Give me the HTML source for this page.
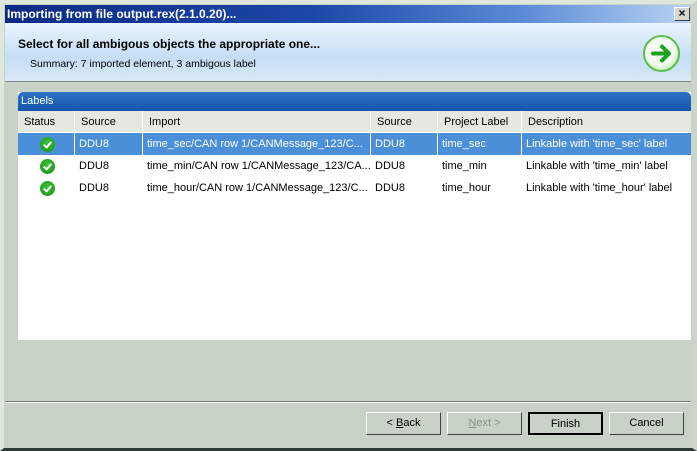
<!DOCTYPE html>
<html><head><style>
*{margin:0;padding:0;box-sizing:border-box}
body{width:697px;height:451px;background:#c9d2c6;position:relative;overflow:hidden;font-family:"Liberation Sans",sans-serif;font-size:11px;color:#000}
.outer{position:absolute;left:0;top:0;width:697px;height:451px;border-top:4px solid #dfe6dc;border-left:4px solid #dfe6dc;border-right:5px solid #cdd5ca;border-bottom:3px solid #2e3a34}
.title{position:absolute;left:5px;top:5px;width:686px;height:18px;background:linear-gradient(90deg,#0a2a84 0%,#1c48a8 45%,#5a8ad6 75%,#b8d4f2 100%);color:#fff;font-weight:bold;font-size:12px;line-height:18px;padding-left:2px}
.close{position:absolute;left:674px;top:7px;width:16px;height:14px;background:#d4d8d0;border:1px solid;border-color:#fff #404040 #404040 #fff;font-size:12px;line-height:11px;text-align:center;font-weight:bold}
.head{position:absolute;left:5px;top:23px;width:686px;height:59px;background:linear-gradient(180deg,#eaf4fc 0%,#c5def6 60%,#d8e8f6 100%);border-bottom:1px solid #7f8a86}
.h1{position:absolute;left:13px;top:14px;font-weight:bold;font-size:12px}
.h2{position:absolute;left:25px;top:35px;font-size:10.5px}
.arrow{position:absolute;left:643px;top:35px;width:37px;height:37px;border-radius:50%;border:2px solid #5cbf4c;background:radial-gradient(circle at 45% 40%,#fff 0%,#f2fcee 55%,#b4e6a6 85%,#7acb68 100%)}
.panel{position:absolute;left:18px;top:92px;width:673px;height:248px;background:#fff}
.ph{height:19px;background:linear-gradient(180deg,#2e72c6,#1556ad);color:#fff;line-height:19px;padding-left:3px;border-radius:5px 5px 0 0;font-size:11px}
.row{position:absolute;left:0;width:673px;height:22px;line-height:22px;font-size:11px;white-space:nowrap}
.row div{position:absolute;top:0;height:22px;padding-left:4px;overflow:hidden}
.hdr{top:19px;height:21px;background:#e3e8e0;line-height:22px}
.hdr div{border-right:1px solid #fff;height:21px;padding-left:6px}
.sel{background:#4a8fd8;color:#fff}
.sel div{border-right:1px solid #fff}
.ok{position:absolute;left:22px;top:4px;width:15px;height:15px;border-radius:50%;background:radial-gradient(circle at 50% 40%,#3dc13a,#159015);padding:0!important}
.ok::after{content:"";position:absolute;left:5px;top:3px;width:3px;height:6px;border:solid #fff;border-width:0 2px 2px 0;transform:rotate(40deg)}
.sep{position:absolute;left:5px;top:401px;width:686px;height:2px;border-top:1px solid #6f7a72;border-bottom:1px solid #fff}
.btn{position:absolute;top:412px;width:75px;height:23px;background:#c9d2c6;border:1px solid;border-color:#fff #404040 #404040 #fff;text-align:center;line-height:21px;font-size:11px}
</style></head><body>
<div class="outer"></div>
<div class="title">Importing from file output.rex(2.1.0.20)...</div>
<div class="close">×</div>
<div class="head">
<div class="h1">Select for all ambigous objects the appropriate one...</div>
<div class="h2">Summary: 7 imported element, 3 ambigous label</div>
</div>
<div class="arrow"><svg width="33" height="33" viewBox="0 0 33 33"><path d="M8 16.5H24M17 9.5l7 7L17 23.5" fill="none" stroke="#1fa01f" stroke-width="4" stroke-linecap="round" stroke-linejoin="round"/></svg></div>
<div class="panel">
<div class="ph">Labels</div>
<div class="row hdr"><div style="left:0;width:57px">Status</div><div style="left:57px;width:68px">Source</div><div style="left:125px;width:228px">Import</div><div style="left:353px;width:67px">Source</div><div style="left:420px;width:84px">Project Label</div><div style="left:504px;width:169px;border:0">Description</div></div>
<div class="row sel" style="top:41px"><div style="left:0;width:57px"><span class="ok"></span></div><div style="left:57px;width:68px">DDU8</div><div style="left:125px;width:228px">time_sec/CAN row 1/CANMessage_123/C...</div><div style="left:353px;width:67px">DDU8</div><div style="left:420px;width:84px">time_sec</div><div style="left:504px;width:169px;border:0">Linkable with 'time_sec' label</div></div>
<div class="row" style="top:63px"><div style="left:0;width:57px"><span class="ok"></span></div><div style="left:57px;width:68px">DDU8</div><div style="left:125px;width:228px">time_min/CAN row 1/CANMessage_123/CA...</div><div style="left:353px;width:67px">DDU8</div><div style="left:420px;width:84px">time_min</div><div style="left:504px;width:169px">Linkable with 'time_min' label</div></div>
<div class="row" style="top:85px"><div style="left:0;width:57px"><span class="ok"></span></div><div style="left:57px;width:68px">DDU8</div><div style="left:125px;width:228px">time_hour/CAN row 1/CANMessage_123/C...</div><div style="left:353px;width:67px">DDU8</div><div style="left:420px;width:84px">time_hour</div><div style="left:504px;width:169px">Linkable with 'time_hour' label</div></div>
</div>
<div class="sep"></div>
<div class="btn" style="left:366px">&lt; <u>B</u>ack</div>
<div class="btn" style="left:447px;color:#8a928a"><u>N</u>ext &gt;</div>
<div class="btn" style="left:528px;border:2px solid #000">Finish</div>
<div class="btn" style="left:609px">Cancel</div>
</body></html>
